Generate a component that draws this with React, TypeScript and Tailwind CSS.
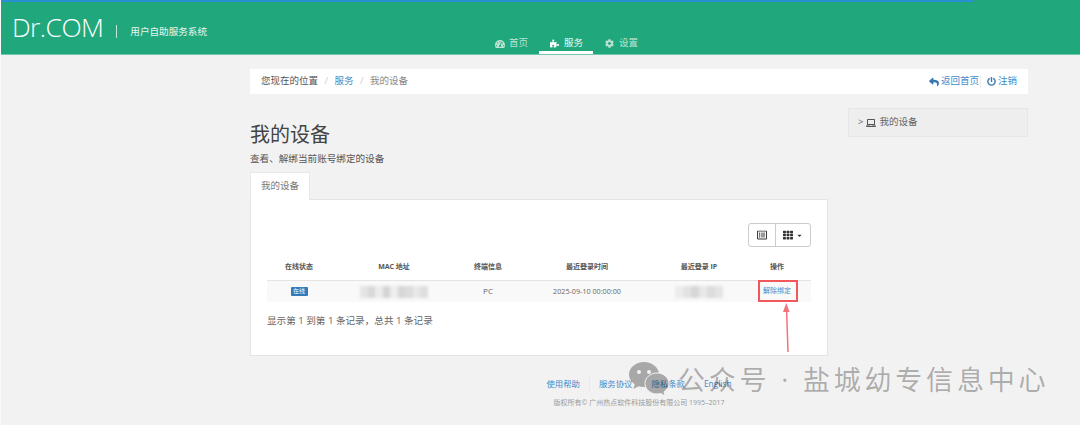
import React from 'react';
import { FaTachometerAlt, FaPuzzlePiece, FaCog, FaReply, FaPowerOff, FaLaptop, FaTh, FaRegListAlt, FaCaretDown } from 'react-icons/fa';

const FONT = "font-['Open_Sans','Noto_Sans_CJK_SC',sans-serif]";

const columns = ['在线状态', 'MAC 地址', '终端信息', '最近登录时间', '最近登录 IP', '操作'];
const colWidths = ['w-[64px]', 'w-[126px]', 'w-[62px]', 'w-[136px]', 'w-[88px]', 'w-[68px]'];

const footerLinks = ['使用帮助', '服务协议', '隐私条款', 'English'];

// mosaic used for the masked MAC and IP
const Blurred: React.FC<{ shades: string[]; cell: string }> = ({ shades, cell }) => (
  <div className="flex blur-[1.5px]">
    {shades.map((c, i) => (
      <div key={i} className={cell} style={{ backgroundColor: c }} />
    ))}
  </div>
);

const Header = () => (
  <header className="h-[55px] bg-[#20a87c] border-b border-[#6fc9ab] flex flex-col">
    <div className="h-[2px] w-[972px] bg-[#2a8fd0]" />
    <div className="flex h-[52px] relative">
      <div className="flex items-center pl-[11px] h-[50px]">
        <span className="text-[26.5px] tracking-[-0.6px] leading-none font-light text-white">Dr.COM</span>
        <span className="ml-[13px] mt-[9px] h-[13px] w-px bg-[#bfe6d8]" />
        <span className="ml-[13px] mt-[10px] text-[9.6px] text-[#e6f6f0]">用户自助服务系统</span>
      </div>
      <nav className="absolute left-[484px] bottom-0 flex text-[9.5px] text-[#b9e3d3]">
        <a className="flex items-center gap-[4px] w-[54px] pl-[10px] h-[17px] pb-[4px]">
          <FaTachometerAlt className="w-[10px] h-[10px]" />
          <span>首页</span>
        </a>
        <a className="flex items-center gap-[5px] w-[54px] pl-[11px] h-[17px] pb-[1px] border-b-[3px] border-white text-[#e9f7f2]">
          <FaPuzzlePiece className="w-[9px] h-[9px] text-white" />
          <span>服务</span>
        </a>
        <a className="flex items-center gap-[5px] pl-[12px] h-[17px] pb-[4px]">
          <FaCog className="w-[9px] h-[9px]" />
          <span>设置</span>
        </a>
      </nav>
    </div>
  </header>
);

const Breadcrumb = () => (
  <div className="h-[25px] bg-white flex items-center justify-between pl-[11px] pr-[11px] text-[9.5px]">
    <div className="flex items-center">
      <span className="text-[#555]">您现在的位置</span>
      <span className="mx-[6.500px] text-[#ccc]">/</span>
      <a className="text-[#428bca]">服务</a>
      <span className="mx-[6.500px] text-[#ccc]">/</span>
      <span className="text-[#888]">我的设备</span>
    </div>
    <div className="flex items-center text-[#428bca]">
      <FaReply className="w-[10px] h-[10px] text-[#3a78ae] mr-[2px]" />
      <span>返回首页</span>
      <span className="w-px h-[13px] bg-[#eee] ml-[1px] mr-[6px]" />
      <FaPowerOff className="w-[9px] h-[9px] text-[#3a78ae] mr-[2px]" />
      <span>注销</span>
    </div>
  </div>
);

const DeviceTable = () => (
  <div className="mx-[16px] text-[7px] text-[#666]">
    <div className="flex h-[34px] items-end pb-[8px] text-center font-bold text-[#555] border-b border-[#e4e4e4]">
      {columns.map((c, i) => (
        <div key={c} className={colWidths[i]}>{c}</div>
      ))}
    </div>
    <div className="flex h-[21px] items-center text-center bg-[#f9f9f9]">
      <div className={`${colWidths[0]} flex justify-center`}>
        <span className="w-[17px] h-[9px] rounded-[1px] bg-[#337ab7] text-white text-[6px] leading-[9px]">在线</span>
      </div>
      <div className={`${colWidths[1]} flex justify-center`}>
        <Blurred
          cell="w-[7.500px] h-[12px]"
          shades={['#e4e4e4', '#d8d8d8', '#ececec', '#d4d4d4', '#eeeeee', '#d6d6d6', '#dcdcdc', '#e8e8e8', '#dedede']}
        />
      </div>
      <div className={`${colWidths[2]} text-[8px] mb-[1px]`}>PC</div>
      <div className={`${colWidths[3]} text-[7.2px]`}>2025-09-10 00:00:00</div>
      <div className={`${colWidths[4]} flex justify-center`}>
        <Blurred
          cell="w-[8px] h-[12px]"
          shades={['#ececec', '#e2e2e2', '#d6d6d6', '#e8e8e8', '#dcdcdc', '#e4e4e4']}
        />
      </div>
      <div className={`${colWidths[5]} h-full relative flex items-center justify-center`}>
        <a className="text-[#428bca]">解除绑定</a>
        <span className="absolute left-[15px] top-[-1px] w-[40px] h-[22px] border-2 border-[#f0585c]" />
      </div>
    </div>
  </div>
);

const DevicePanel = () => (
  <>
    <div className="w-[60px] h-[28px] bg-white border border-b-0 border-[#e8e8e8] flex items-center justify-center text-[9.5px] text-[#777] relative top-px">
      我的设备
    </div>
    <div className="h-[157px] bg-white border border-[#e4e4e4] pt-[23px]">
      <div className="flex justify-end mr-[16px]">
        <div className="flex h-[24px] border border-[#ccc] rounded-[3px] text-[#333]">
          <button className="w-[27px] flex items-center justify-center border-r border-[#ccc]">
            <FaRegListAlt className="w-[10px] h-[10px]" />
          </button>
          <button className="w-[34px] flex items-center justify-center gap-[3px]">
            <FaTh className="w-[10px] h-[10px]" />
            <FaCaretDown className="w-[7px] h-[7px]" />
          </button>
        </div>
      </div>
      <DeviceTable />
      <p className="mx-[16px] mt-[12px] text-[9.6px] leading-[14px] text-[#666]">显示第 1 到第 1 条记录，总共 1 条记录</p>
    </div>
  </>
);

const Footer = () => (
  <footer className="flex flex-col items-center mt-[21px]">
    <div className="flex text-[8.400px] text-[#428bca] leading-[14px]">
      {footerLinks.map((l, i) => (
        <span key={l} className={i < footerLinks.length - 1 ? 'pr-[9px] mr-[9px] border-r border-[#e8e8e8]' : ''}>{l}</span>
      ))}
    </div>
    <p className="mt-[7px] text-[7px] leading-[10px] text-[#999]">版权所有© 广州热点软件科技股份有限公司 1995–2017</p>
  </footer>
);

// WeChat watermark across the footer
const Watermark = () => (
  <div className="absolute left-[627px] top-[361px] flex items-center text-black/30 pointer-events-none">
    <svg width="42" height="36" viewBox="0 0 42 36" className="mr-[8px] opacity-30">
      <path d="M16 1C7.700 1 1 6.600 1 13.500c0 4 2.200 7.500 5.700 9.800L5.500 28l5-2.800c1.700.5 3.500.8 5.500.8 8.300 0 15-5.600 15-12.500S24.300 1 16 1z" fill="#000" />
      <circle cx="11" cy="11" r="2" fill="#f2f2f2" />
      <circle cx="21" cy="11" r="2" fill="#f2f2f2" />
      <path d="M29 12c-6.600 0-12 4.700-12 10.500S22.400 33 29 33c1.300 0 2.500-.2 3.700-.5L37 35l-1-4.200c3-1.900 5-5 5-8.300C41 16.700 35.600 12 29 12z" fill="#000" stroke="#f2f2f2" strokeWidth="1" />
    </svg>
    <span className="text-[27px] tracking-[3.800px] leading-none whitespace-nowrap">公众号 · 盐城幼专信息中心</span>
  </div>
);

const Arrow = () => (
  <svg width="12" height="54" viewBox="0 0 12 54" className="absolute left-[780px] top-[302px] pointer-events-none">
    <path d="M7 50 L5.500 6" stroke="#f4727a" strokeWidth="1.500" fill="none" />
    <path d="M5.300 1 L2 10 L8.500 10 Z" fill="#f4727a" />
  </svg>
);

export default function App() {
  return (
    <div className={`relative w-[1080px] h-[425px] overflow-hidden bg-[#f2f2f2] border-l border-[#fafafa] ${FONT}`}>
      <Header />
      <div className="flex ml-[249px] mt-[14px]">
        <div className="w-[778px]">
          <Breadcrumb />
          <div className="flex">
            <main className="w-[578px]">
              <h1 className="mt-[28px] text-[20px] leading-[26px] text-[#444]">我的设备</h1>
              <p className="mt-[4px] text-[9.6px] leading-[14px] text-[#555]">查看、解绑当前账号绑定的设备</p>
              <div className="mt-[5px]">
                <DevicePanel />
              </div>
            </main>
            <aside className="ml-[20px] w-[180px] mt-[14px]">
              <div className="h-[29px] bg-[#eeeeee] border border-[#e6e6e6] flex items-center pl-[9px] text-[9.5px] text-[#666]">
                <span className="mr-[3px]">&gt;</span>
                <FaLaptop className="w-[10px] h-[10px] text-[#555] mr-[3px]" />
                <span>我的设备</span>
              </div>
            </aside>
          </div>
          <Footer />
        </div>
      </div>
      <Watermark />
      <Arrow />
    </div>
  );
}
